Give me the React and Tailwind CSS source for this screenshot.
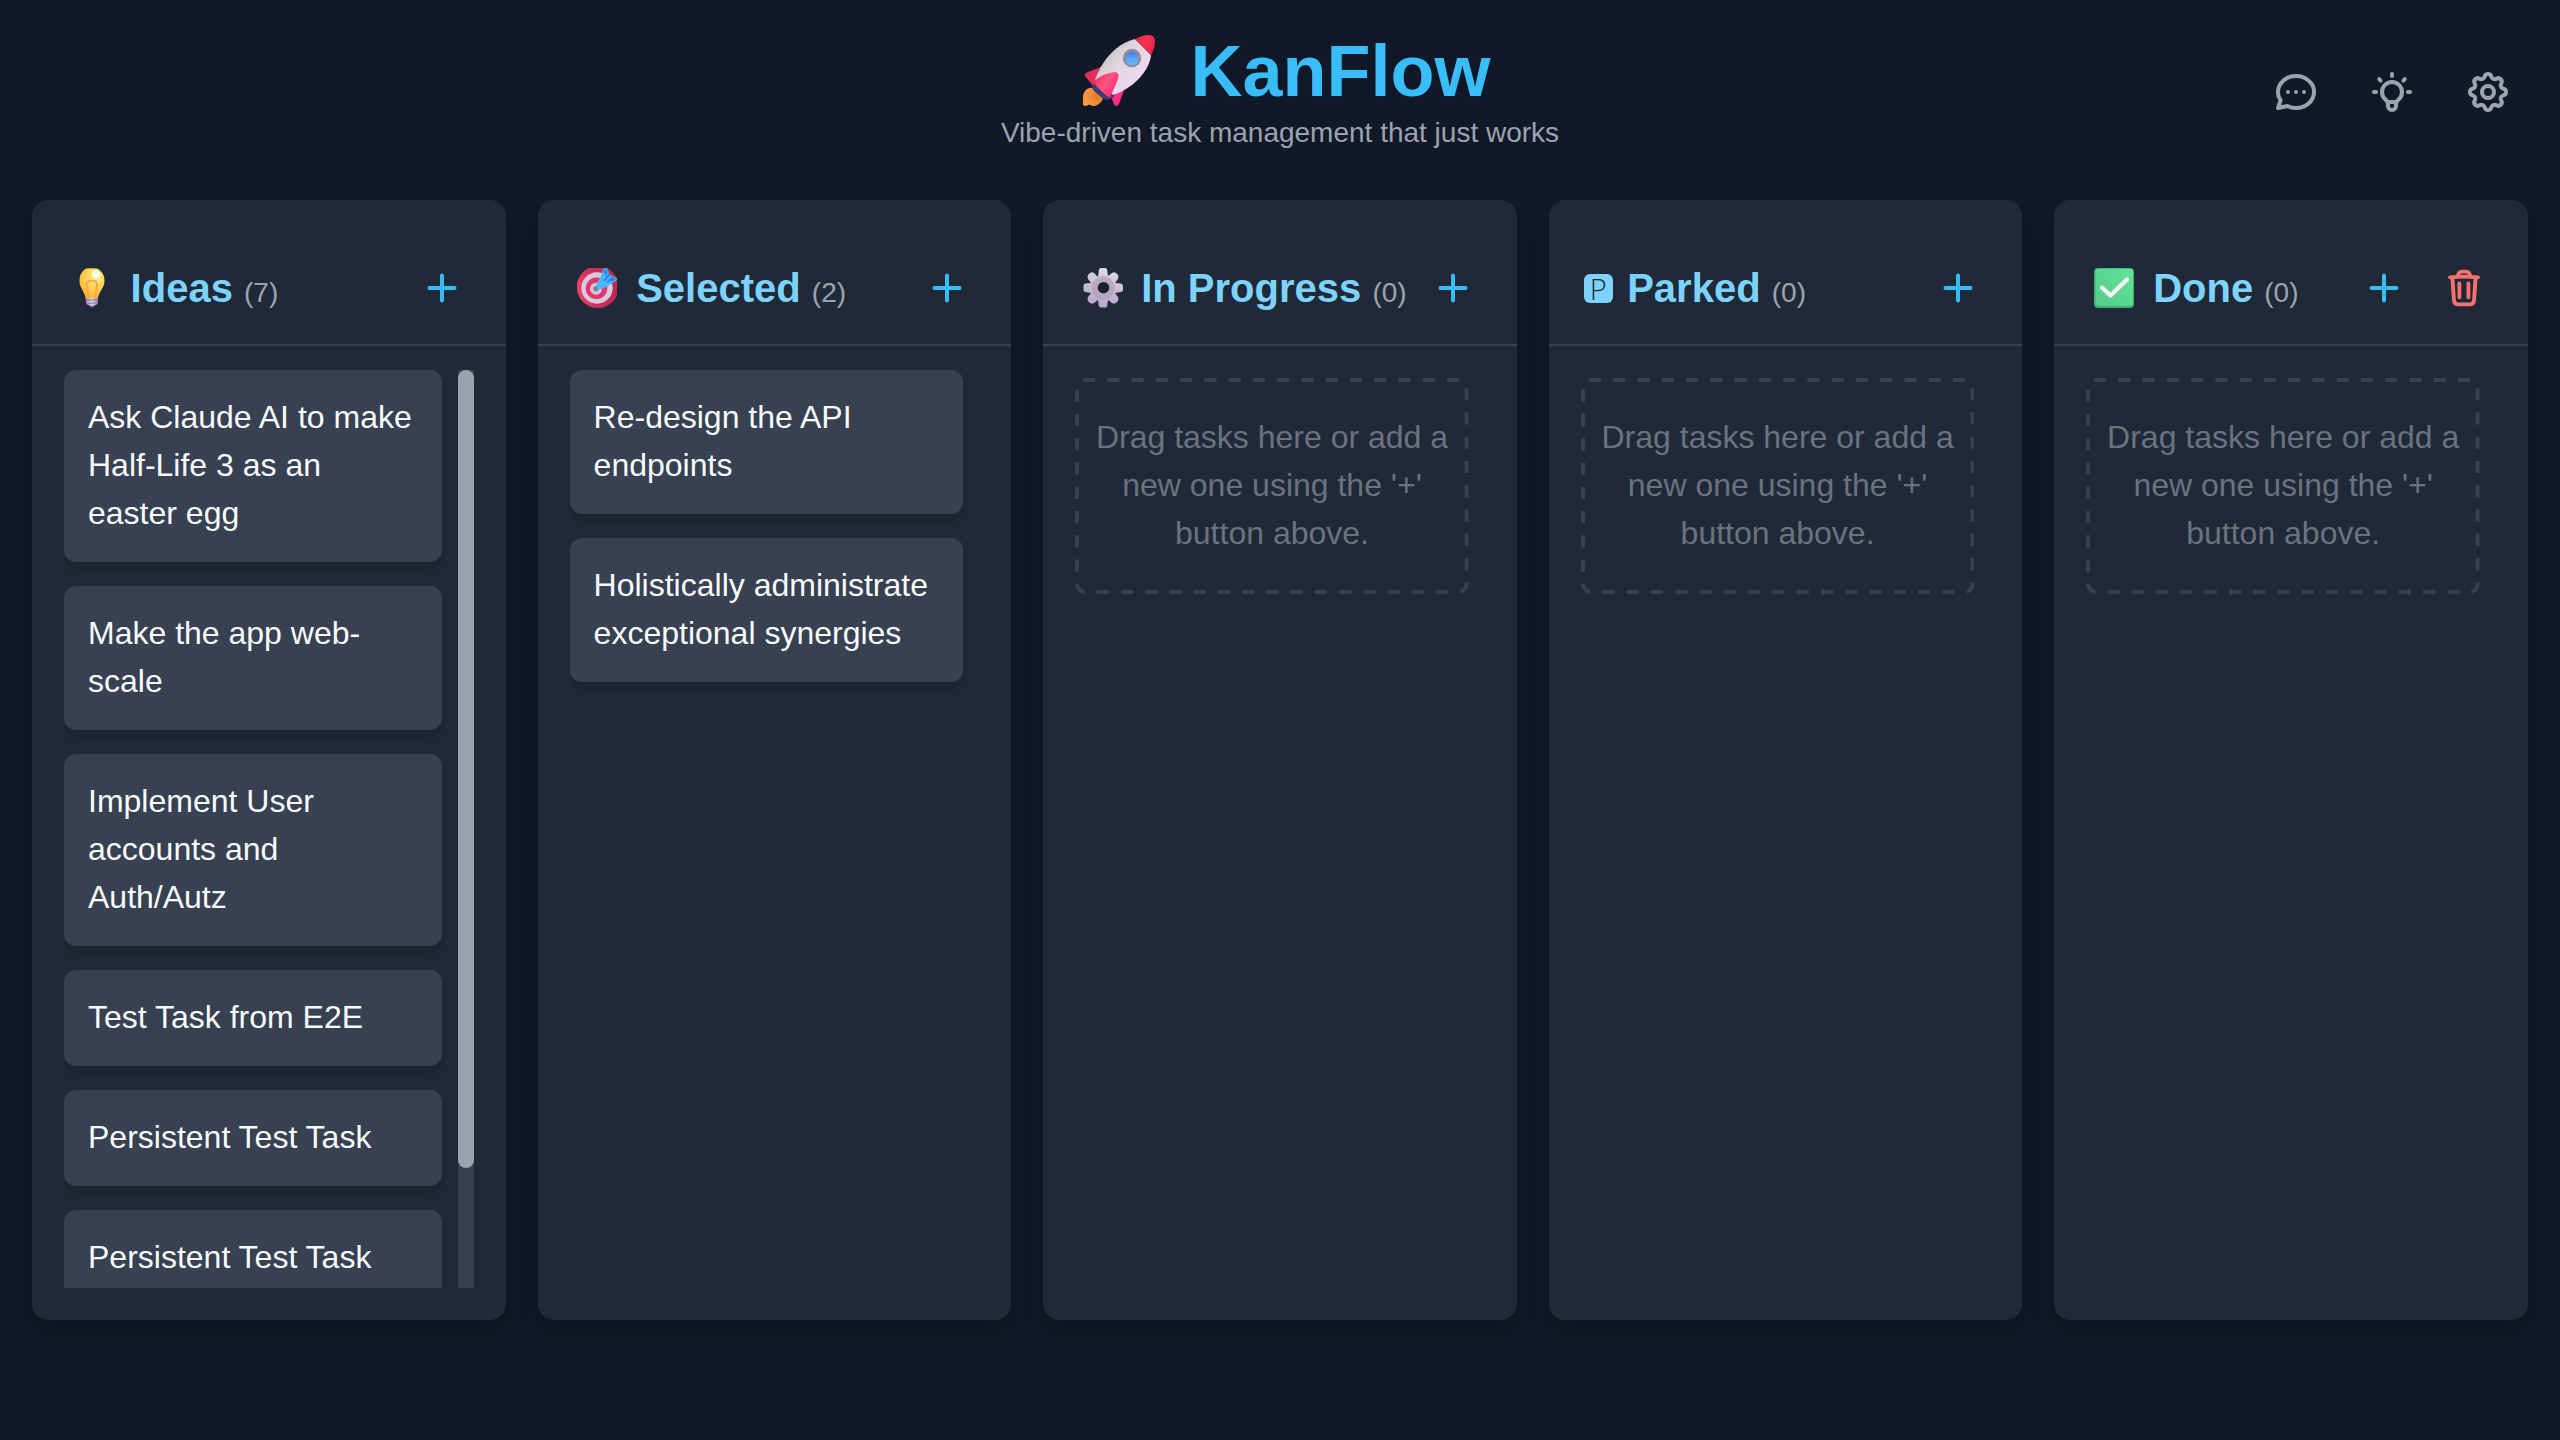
import React from 'react';

function Rocket() {
  return (
    <svg className="w-[72px] h-[72px] ml-[14px] mr-[35px] -mt-px shrink-0" viewBox="0 0 72 72">
      <defs>
        <linearGradient id="rk-body" x1="0.15" y1="0.3" x2="0.75" y2="0.8">
          <stop offset="0" stopColor="#c9c3c4" />
          <stop offset="0.35" stopColor="#ddd6dc" />
          <stop offset="1" stopColor="#eed9f4" />
        </linearGradient>
        <linearGradient id="rk-nose" x1="0" y1="0" x2="1" y2="0.6">
          <stop offset="0" stopColor="#d8243f" />
          <stop offset="0.5" stopColor="#f8344f" />
          <stop offset="1" stopColor="#ef2340" />
        </linearGradient>
        <linearGradient id="rk-fin" x1="0" y1="0.2" x2="1" y2="0.8">
          <stop offset="0" stopColor="#f3245f" />
          <stop offset="0.45" stopColor="#ff5580" />
          <stop offset="1" stopColor="#fb2277" />
        </linearGradient>
        <radialGradient id="rk-fire" cx="0.7" cy="0.5" r="0.7">
          <stop offset="0" stopColor="#e07a28" />
          <stop offset="1" stopColor="#ff9a44" />
        </radialGradient>
        <linearGradient id="rk-glass" x1="0" y1="0" x2="0" y2="1">
          <stop offset="0" stopColor="#3d78f5" />
          <stop offset="0.5" stopColor="#5aa5ff" />
          <stop offset="1" stopColor="#6cb6ff" />
        </linearGradient>
      </defs>
      <path d="M10 53C4 52 0 57 0 63V70Q3 72 5 70Q7 69 9 71H12C17 69 20 66 20 62Z" fill="url(#rk-fire)" />
      <path d="M18 32L5 37Q1 38 2 41L10 51L22 44Z" fill="#e12d5c" />
      <path d="M41 54L28 62L31 69Q33 73 36 69L41 55Z" fill="#ff2f86" />
      <path d="M9 51L14 46L31 62L25 65Q22 65 19 63L11 56Q9 54 9 51Z" fill="#3d3c72" />
      <path d="M12 45C18 28 30 10 52 4L68 20C67 35 50 54 30 60Z" fill="url(#rk-body)" />
      <path d="M52 4Q60 0 65 0Q72 0 72 6Q72 13 68 20Z" fill="url(#rk-nose)" />
      <path d="M10 47Q20 38 32 37Q37 38 35 44L27 63Q18 57 10 47Z" fill="url(#rk-fin)" />
      <circle cx="49" cy="23" r="9.2" fill="#918b99" />
      <circle cx="49" cy="23.6" r="6.6" fill="url(#rk-glass)" />
    </svg>
  );
}

function BulbEmoji() {
  return (
    <svg className="w-10 h-10 ml-2 mr-[18.600px] shrink-0" viewBox="0 0 40 40">
      <defs>
        <radialGradient id="bulb" cx="0.65" cy="0.3" r="0.75">
          <stop offset="0" stopColor="#fff3a0" />
          <stop offset="0.4" stopColor="#ffd95c" />
          <stop offset="1" stopColor="#ffb52e" />
        </radialGradient>
        <linearGradient id="bulb-base" x1="0" y1="0" x2="1" y2="0">
          <stop offset="0" stopColor="#9c83a8" />
          <stop offset="0.5" stopColor="#e6d8ea" />
          <stop offset="1" stopColor="#9d86a6" />
        </linearGradient>
      </defs>
      <path d="M14 0.500Q18 0 25 0.500C30 3 32.500 7 32.500 13C32.500 20 27 23 26 30H13.500C12.500 23 7.500 20 7.500 13C7.500 7 10 3 14 0.500Z" fill="url(#bulb)" />
      <path d="M17 30L15.500 20Q13 13 20 12.500Q27 13 24.500 20L23 30" fill="none" stroke="#fba94c" strokeWidth="2.200" />
      <ellipse cx="24" cy="6" rx="4.500" ry="4" fill="#fffbe8" transform="rotate(35 24 6)" />
      <path d="M13.500 30H26V35Q25 37 22.500 37.500Q20 40.500 17.500 37.500Q15 37 14 35Z" fill="url(#bulb-base)" />
      <path d="M14 32.500L26 31.500M14.500 35.800L25.500 34.500" stroke="#8d7299" strokeWidth="1" />
      <path d="M17.500 37.500H22.500Q20 41 17.500 37.500Z" fill="#9a5fd0" />
    </svg>
  );
}

function TargetEmoji() {
  return (
    <svg className="w-10 h-10 ml-[7.400px] mr-[19.200px] shrink-0" viewBox="0 0 40 40">
      <defs>
        <linearGradient id="tg-out" x1="0" y1="0.6" x2="1" y2="0.4">
          <stop offset="0" stopColor="#ee4468" />
          <stop offset="0.35" stopColor="#d02f5c" />
          <stop offset="1" stopColor="#b8284f" />
        </linearGradient>
      </defs>
      <circle cx="20.800" cy="19" r="21" fill="url(#tg-out)" />
      <circle cx="20" cy="20" r="15.700" fill="#d8cbe0" />
      <circle cx="19.500" cy="20.300" r="10.800" fill="#e0366a" />
      <circle cx="19" cy="20.700" r="6" fill="#d3c6da" />
      <circle cx="19" cy="20.700" r="2.700" fill="#8f7a95" />
      <path d="M18.500 20.500L24 15" stroke="#6a5a8a" strokeWidth="1.500" />
      <path d="M19.500 15.500L24 8L25.500 2Q27 0 30.500 0L32 6L38 9.500Q41 10 39.500 12.500L34 16L27 20Q18 24 19.500 15.500Z" fill="#4fb6f6" />
      <path d="M25 3L30 8L30.500 1ZM33 14L39.500 11.500L35 9.500Z" fill="#2c86e2" />
      <path d="M27 13L33 6M30 14.500L36 9" stroke="#2a7fdc" strokeWidth="1.600" />
    </svg>
  );
}

function GearEmoji() {
  return (
    <svg className="w-10 h-10 ml-[7.400px] mr-[18.600px] shrink-0" viewBox="0 0 40 40">
      <defs>
        <linearGradient id="gear" gradientUnits="userSpaceOnUse" x1="24" y1="0" x2="14" y2="40">
          <stop offset="0" stopColor="#e2dae8" />
          <stop offset="0.5" stopColor="#c9bad3" />
          <stop offset="1" stopColor="#b9a2d2" />
        </linearGradient>
      </defs>
      <path
        d="M15 9L15.800 2Q16.200 0 18 0H22Q23.800 0 24.200 2L25 8L29 5Q31 3.500 33 5L35 7Q36 9 35 11L32 15L38 15.500Q40 16 40 18V22Q40 23.500 38 24L32 25L35 29Q36 31 35 33L33 35Q31 36 29 35L25 32L24.200 38Q23.800 39.500 22 39.500H18Q16.200 39.500 15.800 38L15 32L11 35Q9 36 7 35L5 33Q4 31 5 29L8 25L2 24Q0.500 23.500 0.500 22V18Q0.500 16 2 15.500L8 15L5 11Q4 9 5 7L7 5Q9 3.500 11 5Z"
        fill="url(#gear)"
      />
      <circle cx="20.300" cy="19.700" r="10.500" fill="none" stroke="#a698ab" strokeWidth="1.800" opacity="0.6" />
      <circle cx="20.300" cy="19.700" r="7.800" fill="none" stroke="#b7a9ba" strokeWidth="3.600" />
      <circle cx="20.500" cy="19.700" r="5.800" fill="#1b2331" />
    </svg>
  );
}

function ParkedIcon() {
  return (
    <span className="flex items-center justify-center w-[29px] h-[29px] ml-[3px] mr-[14.400px] shrink-0 rounded-[6px] bg-[#7dd3fc] text-[#1f2937] text-[29px] leading-none font-light font-['Open_Sans',sans-serif]">
      P
    </span>
  );
}

function CheckEmoji() {
  return (
    <svg className="w-10 h-10 ml-[7.600px] mr-[19.200px] shrink-0" viewBox="0 0 40 40">
      <defs>
        <linearGradient id="ck" x1="0" y1="1" x2="1" y2="0">
          <stop offset="0" stopColor="#53cd88" />
          <stop offset="1" stopColor="#60e396" />
        </linearGradient>
      </defs>
      <rect width="40" height="40" rx="4" fill="#3fae6e" />
      <rect x="1.500" y="0.800" width="37.500" height="37.200" rx="3" fill="url(#ck)" />
      <path d="M8 19.500L16.500 27.500L33 11.500" fill="none" stroke="#f7effb" strokeWidth="4.400" strokeLinecap="round" strokeLinejoin="round" />
    </svg>
  );
}

function StrokeIcon({ children }) {
  return (
    <button className="p-6">
      <svg className="w-12 h-12" viewBox="0 0 24 24" fill="none" stroke="#9ca3af" strokeWidth="2" strokeLinecap="round" strokeLinejoin="round">
        {children}
      </svg>
    </button>
  );
}

function Plus() {
  return (
    <button className="p-4">
      <svg className="w-8 h-8" viewBox="0 0 32 32" fill="none" stroke="#38bdf8" strokeWidth="4" strokeLinecap="round">
        <path d="M16 3.500V28.500M3.500 16H28.500" />
      </svg>
    </button>
  );
}

function Trash() {
  return (
    <button className="py-3 px-3">
      <svg className="w-10 h-10" viewBox="0 0 40 40" fill="none" stroke="#f87171" strokeWidth="3.800" strokeLinecap="round" strokeLinejoin="round">
        <path d="M6 9.300Q20 7.900 34 9.300" />
        <path d="M13.800 8Q14.500 3.600 18 3.600H22Q25.500 3.600 26.200 8" />
        <path d="M8.400 10L10 32.800Q10.400 36.300 14 36.300H26Q29.600 36.300 30 32.800L31.600 10" />
        <path d="M15.400 15.500V29.300M24.400 15.500V29.300" />
      </svg>
    </button>
  );
}

function EmptyState() {
  return (
    <div className="relative mt-2 pt-[35px] pb-[37px] px-4 text-center text-[32px] leading-[48px] text-[#6b7280]">
      <svg className="absolute inset-0 w-full h-full" viewBox="0 0 393.600 216" preserveAspectRatio="none">
        <rect x="2" y="2" width="389.600" height="212" rx="8" fill="none" stroke="#374151" strokeWidth="4" pathLength="1176" strokeDasharray="12 12" strokeDashoffset="2" />
      </svg>
      Drag tasks here or add a new one using the '+' button above.
    </div>
  );
}

const columns = [
  {
    name: 'Ideas', count: 7, icon: <BulbEmoji />, scroll: true,
    tasks: [
      'Ask Claude AI to make Half-Life 3 as an easter egg',
      'Make the app web-scale',
      'Implement User accounts and Auth/Autz',
      'Test Task from E2E',
      'Persistent Test Task',
      'Persistent Test Task',
    ],
  },
  { name: 'Selected', count: 2, icon: <TargetEmoji />, tasks: ['Re-design the API endpoints', 'Holistically administrate exceptional synergies'] },
  { name: 'In Progress', count: 0, icon: <GearEmoji />, tasks: [] },
  { name: 'Parked', count: 0, icon: <ParkedIcon />, tasks: [] },
  { name: 'Done', count: 0, icon: <CheckEmoji />, tasks: [], clearable: true },
];

function Column({ col }) {
  return (
    <section className="flex flex-col flex-1 min-w-0 h-[1120px] rounded-[16px] bg-[#1f2937] shadow-[0_20px_30px_-6px_rgba(0,0,0,0.1),0_8px_12px_-4px_rgba(0,0,0,0.1)]">
      <div className="flex items-center justify-between h-[146px] pt-14 pb-6 px-8 border-b-2 border-[#374151] shrink-0">
        <h2 className="flex items-center h-16 whitespace-nowrap text-[40px] leading-[56px] font-bold text-[#7dd3fc]">
          {col.icon}
          <span className="pt-[5px]">
            {col.name} <span className="text-[28px] font-normal text-[#9ca3af]">({col.count})</span>
          </span>
        </h2>
        <div className="flex items-center gap-4">
          <Plus />
          {col.clearable && <Trash />}
        </div>
      </div>
      <div className="flex flex-1 min-h-0 mt-6 mx-8 mb-8 overflow-hidden">
        <div className="flex flex-col flex-1 min-w-0 gap-6 mr-4">
          {col.tasks.map((t, i) => (
            <div key={i} className="shrink-0 pt-[23px] pb-[25px] px-6 rounded-[12px] bg-[#374151] text-[32px] leading-[48px] text-[#f9fafb] shadow-[0_8px_12px_-2px_rgba(0,0,0,0.1),0_4px_8px_-4px_rgba(0,0,0,0.1)]">
              {t}
            </div>
          ))}
          {col.tasks.length === 0 && <EmptyState />}
        </div>
        {col.scroll && (
          <div className="w-4 shrink-0 bg-[#374151]">
            <div className="h-[798px] rounded-full bg-[#9ca3af]" />
          </div>
        )}
      </div>
    </section>
  );
}

export default function App() {
  return (
    <div className="w-[2560px] h-[1440px] overflow-hidden bg-[#111827] font-['Liberation_Sans',Arial,sans-serif]">
      <header className="grid grid-cols-[1fr_auto_1fr] items-start h-[200px] px-8">
        <div />
        <div className="flex flex-col items-center pt-[31px]">
          <h1 className="flex items-center h-20 text-[72px] leading-[80px] font-bold text-[#38bdf8]">
            <Rocket />
            KanFlow
          </h1>
          <p className="mt-[2px] text-[28px] leading-[40px] text-[#9ca3af]">Vibe-driven task management that just works</p>
        </div>
        <div className="flex justify-end pt-11 -mr-8 pr-6">
          <StrokeIcon>
            <path d="M3 20l1.300 -3.900a9 8 0 1 1 3.400 2.900l-4.700 1" />
            <path d="M12 12v.01M8 12v.01M16 12v.01" />
          </StrokeIcon>
          <StrokeIcon>
            <path d="M3 12h1m8 -9v1m8 8h1m-15.400 -6.400l.7 .7m12.100 -.7l-.7 .7" />
            <path d="M9 16a5 5 0 1 1 6 0a3.500 3.500 0 0 0 -1 3a2 2 0 0 1 -4 0a3.500 3.500 0 0 0 -1 -3" />
            <path d="M9.700 17l4.600 0" />
          </StrokeIcon>
          <StrokeIcon>
            <path d="M10.325 4.317c.426-1.756 2.924-1.756 3.350 0a1.724 1.724 0 0 0 2.573 1.066c1.543-.94 3.310.826 2.370 2.370a1.724 1.724 0 0 0 1.065 2.572c1.756.426 1.756 2.924 0 3.350a1.724 1.724 0 0 0-1.066 2.573c.94 1.543-.826 3.310-2.370 2.370a1.724 1.724 0 0 0-2.572 1.065c-.426 1.756-2.924 1.756-3.350 0a1.724 1.724 0 0 0-2.573-1.066c-1.543.94-3.310-.826-2.370-2.370a1.724 1.724 0 0 0-1.065-2.572c-1.756-.426-1.756-2.924 0-3.350a1.724 1.724 0 0 0 1.066-2.573c-.94-1.543.826-3.310 2.370-2.370.996.608 2.296.070 2.572-1.065z" />
            <circle cx="12" cy="12" r="3" />
          </StrokeIcon>
        </div>
      </header>
      <main className="flex gap-8 px-8">
        {columns.map((c) => (
          <Column key={c.name} col={c} />
        ))}
      </main>
    </div>
  );
}
